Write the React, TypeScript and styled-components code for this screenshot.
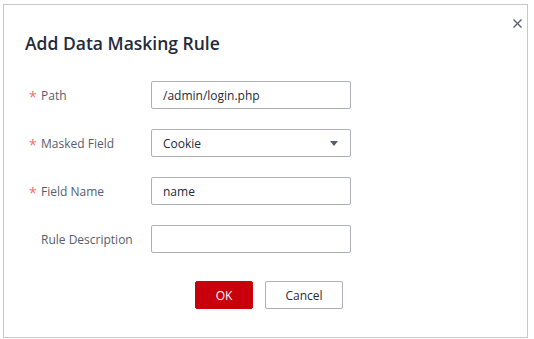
import React from "react";
import styled, { createGlobalStyle } from "styled-components";

const GlobalStyle = createGlobalStyle`
  body {
    margin: 0;
    background: #ffffff;
    font-family: "Open Sans", "Noto Sans", sans-serif;
  }
`;

// 다이얼로그 전체
const Dialog = styled.div`
  box-sizing: border-box;
  width: 525px;
  height: 334px;
  margin: 4px 0 0 3px;
  border: 1px solid #c8c8cc;
  background: #ffffff;
  position: relative;
  padding: 0 20px 0 21px;
`;

// 닫기 버튼
const CloseButton = styled.button`
  position: absolute;
  top: 8px;
  right: 0px;
  width: 20px;
  height: 20px;
  padding: 0;
  border: none;
  background: transparent;
  display: flex;
  align-items: center;
  justify-content: center;
  cursor: pointer;
`;

const Title = styled.h2`
  margin: 0;
  padding-top: 26px;
  font-size: 17.5px;
  line-height: 24px;
  font-weight: 600;
  color: #252b3a;
`;

const Form = styled.div`
  display: flex;
  flex-direction: column;
  gap: 20px;
  margin-top: 26px;
  padding-left: 4px;
`;

const Row = styled.div`
  display: flex;
  align-items: center;
  height: 28px;
`;

const Label = styled.label`
  width: 122px;
  display: flex;
  align-items: center;
  font-size: 12px;
  color: #575d6c;
`;

const Star = styled.span<{ $hidden?: boolean }>`
  width: 12px;
  color: #f66f6a;
  font-size: 14px;
  line-height: 14px;
  padding-top: 3px;
  visibility: ${(p) => (p.$hidden ? "hidden" : "visible")};
`;

const Input = styled.div`
  box-sizing: border-box;
  width: 200px;
  height: 28px;
  border: 1px solid #adb0b8;
  border-radius: 2px;
  padding: 0 12px 0 11px;
  display: flex;
  align-items: center;
  justify-content: space-between;
  font-size: 12px;
  color: #252b3a;
`;

const Caret = styled.span`
  width: 0;
  height: 0;
  border-left: 4px solid transparent;
  border-right: 4px solid transparent;
  border-top: 5px solid #575d6c;
`;

const Footer = styled.div`
  display: flex;
  justify-content: center;
  gap: 12px;
  margin-top: 28px;
  padding-left: 6px;
`;

const Button = styled.button<{ $primary?: boolean }>`
  box-sizing: border-box;
  height: 28px;
  min-width: ${(p) => (p.$primary ? "58px" : "78px")};
  border-radius: 2px;
  border: 1px solid ${(p) => (p.$primary ? "#c7000b" : "#adb0b8")};
  background: ${(p) => (p.$primary ? "#c7000b" : "#ffffff")};
  color: ${(p) => (p.$primary ? "#ffffff" : "#252b3a")};
  font-family: inherit;
  font-size: 12px;
  padding: 0 12px;
`;

const fields = [
  { label: "Path", required: true, value: "/admin/login.php" },
  { label: "Masked Field", required: true, value: "Cookie", select: true },
  { label: "Field Name", required: true, value: "name" },
  { label: "Rule Description", required: false, value: "" },
];

export default function App() {
  return (
    <>
      <GlobalStyle />
      <Dialog>
        <CloseButton aria-label="close">
          <svg width="9" height="9" viewBox="0 0 9 9">
            <path d="M0.5 0.5 L8.5 8.5 M8.5 0.5 L0.5 8.5" stroke="#575d6c" strokeWidth="1.3" />
          </svg>
        </CloseButton>
        <Title>Add Data Masking Rule</Title>
        <Form>
          {fields.map((f) => (
            <Row key={f.label}>
              <Label>
                <Star $hidden={!f.required}>*</Star>
                {f.label}
              </Label>
              <Input>
                <span>{f.value}</span>
                {f.select && <Caret />}
              </Input>
            </Row>
          ))}
        </Form>
        <Footer>
          <Button $primary>OK</Button>
          <Button>Cancel</Button>
        </Footer>
      </Dialog>
    </>
  );
}
